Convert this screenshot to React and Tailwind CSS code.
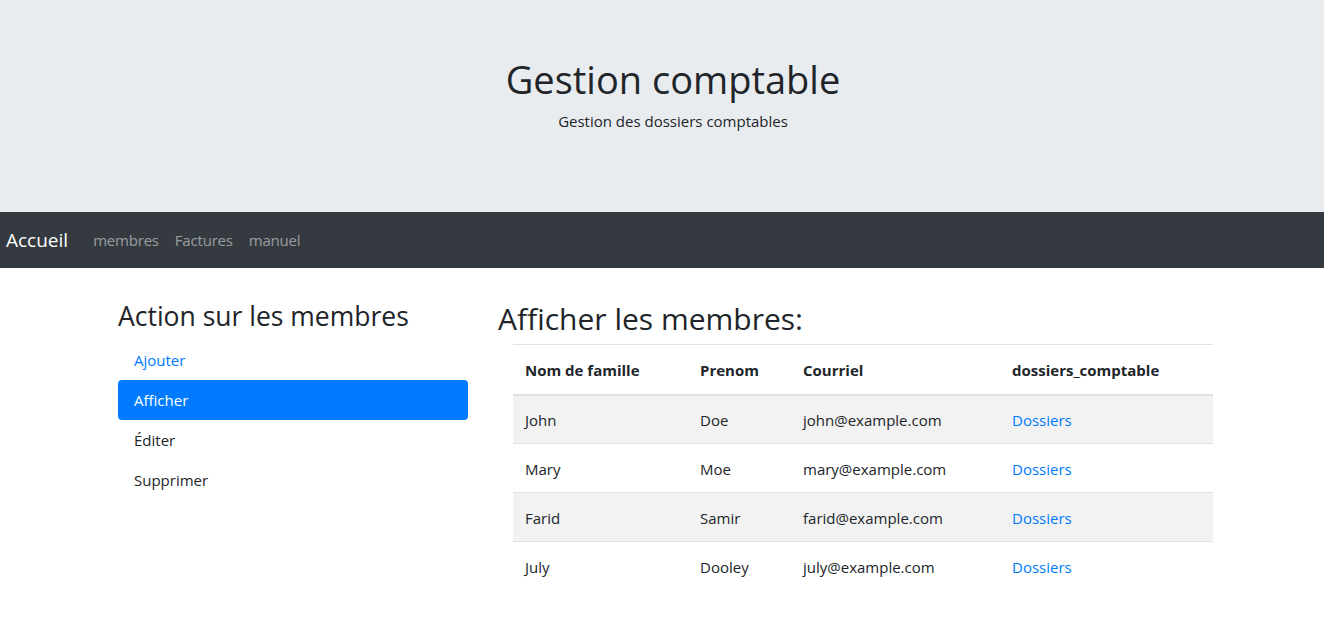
const members = [
  { nom: "John", prenom: "Doe", courriel: "john@example.com" },
  { nom: "Mary", prenom: "Moe", courriel: "mary@example.com" },
  { nom: "Farid", prenom: "Samir", courriel: "farid@example.com" },
  { nom: "July", prenom: "Dooley", courriel: "july@example.com" },
];

const actions = ["Ajouter", "Afficher", "Éditer", "Supprimer"];

export default function App() {
  return (
    <div className="min-h-screen bg-white text-[#212529] font-['Open_Sans',sans-serif] text-base">
      <header className="h-[212px] bg-[#e9ecef] flex flex-col items-center pt-[56px]">
        <h1 className="text-[38px] leading-[46px] font-normal pl-[22px]">Gestion comptable</h1>
        <p className="mt-[7px] text-[15px] leading-6 pl-[22px]">Gestion des dossiers comptables</p>
      </header>

      <nav className="h-14 bg-[#343a40] flex items-center px-[6px]">
        <a className="text-white text-[19px] mr-[17px] leading-[30px]">Accueil</a>
        <ul className="flex">
          <li className="px-2 text-[15px] text-white/50 tracking-[-0.2px]">membres</li>
          <li className="px-2 text-[15px] text-white/50 tracking-[-0.2px]">Factures</li>
          <li className="px-2 text-[15px] text-white/50 tracking-[-0.2px]">manuel</li>
        </ul>
      </nav>

      <main className="flex pl-[118px] pt-[32px]">
        <aside className="w-[350px] mr-[30px]">
          <h3 className="text-[26.5px] leading-8 mb-[8px]">Action sur les membres</h3>
          <ul className="flex flex-col">
            {actions.map((a, i) => (
              <li
                key={a}
                className={`h-10 flex items-center px-4 rounded text-[15px] ${
                  i === 1 ? "bg-[#007bff] text-white" : i === 0 ? "text-[#007bff]" : "text-[#212529]"
                }`}
              >
                {a}
              </li>
            ))}
          </ul>
        </aside>

        <section className="flex flex-col">
          <h2 className="text-[30px] leading-[38px] mb-[6px] mt-0">Afficher les membres:</h2>
          <table className="ml-[15px] w-[700px] border-collapse text-[15px]">
            <thead>
              <tr className="h-[50px] border-t border-b-2 border-[#dee2e6] text-left">
                <th className="w-[175px] px-3 pt-[2px] font-bold">Nom de famille</th>
                <th className="w-[103px] px-3 pt-[2px] font-bold">Prenom</th>
                <th className="w-[209px] px-3 pt-[2px] font-bold">Courriel</th>
                <th className="px-3 pt-[2px] font-bold">dossiers_comptable</th>
              </tr>
            </thead>
            <tbody>
              {members.map((m, i) => (
                <tr
                  key={m.nom}
                  className={`h-[49px] ${i > 0 ? "border-t border-[#dee2e6]" : ""} ${
                    i % 2 === 0 ? "bg-[#f2f2f2]" : ""
                  }`}
                >
                  <td className="px-3 pt-[2px]">{m.nom}</td>
                  <td className="px-3 pt-[2px]">{m.prenom}</td>
                  <td className="px-3 pt-[2px]">{m.courriel}</td>
                  <td className="px-3 pt-[2px] text-[#007bff]">Dossiers</td>
                </tr>
              ))}
            </tbody>
          </table>
        </section>
      </main>
    </div>
  );
}
